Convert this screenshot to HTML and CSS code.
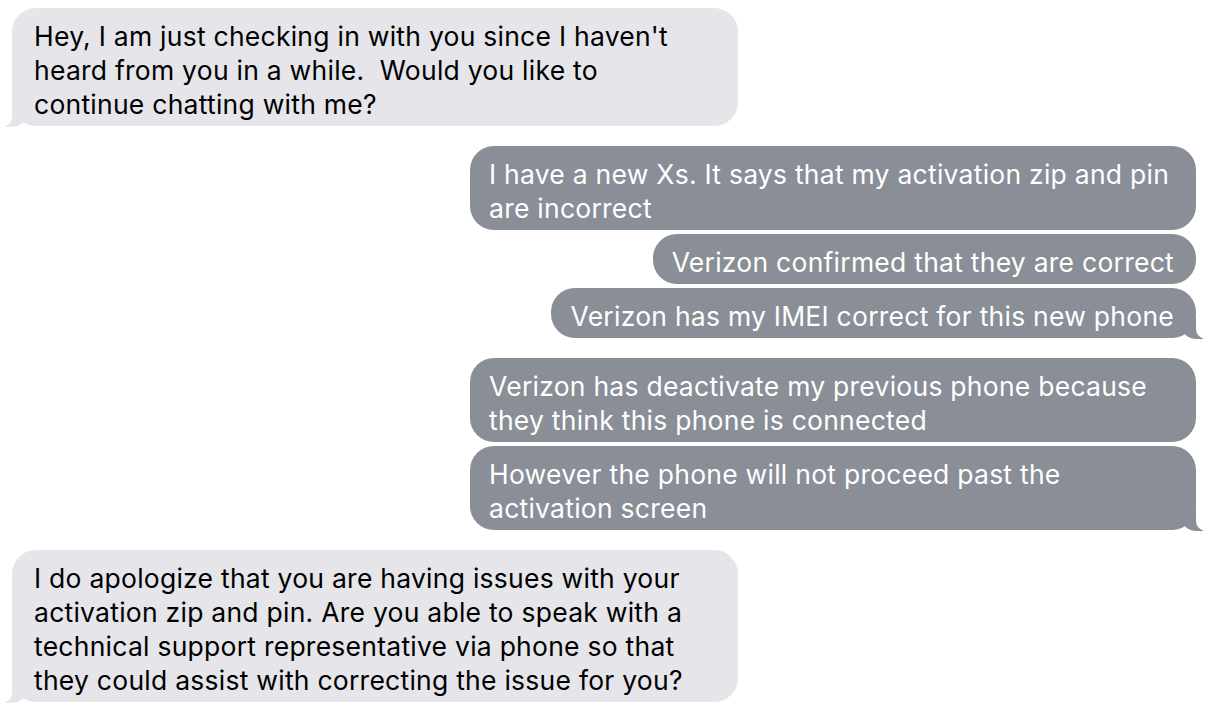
FILE: index.html
```html
<!DOCTYPE html>
<html>
<head>
<meta charset="utf-8">
<link rel="stylesheet" href="styles.css">
</head>
<body>
<div class="thread">
  <div class="msg them wide tail">Hey, I am just checking in with you since I haven't<br>heard from you in a while.&nbsp; Would you like to<br>continue chatting with me?</div>

  <div class="msg me wide gap-lg">I have a new Xs. It says that my activation zip and pin<br>are incorrect</div>
  <div class="msg me gap-sm">Verizon confirmed that they are correct</div>
  <div class="msg me gap-sm tail">Verizon has my IMEI correct for this new phone</div>

  <div class="msg me wide gap-lg">Verizon has deactivate my previous phone because<br>they think this phone is connected</div>
  <div class="msg me wide gap-sm tail">However the phone will not proceed past the<br>activation screen</div>

  <div class="msg them wide gap-lg tail">I do apologize that you are having issues with your<br>activation zip and pin. Are you able to speak with a<br>technical support representative via phone so that<br>they could assist with correcting the issue for you?</div>
</div>
</body>
</html>
```

FILE: styles.css
```css
* { box-sizing: border-box; }

html, body {
  margin: 0;
  padding: 0;
  background: #ffffff;
}

body {
  width: 1216px;
  height: 712px;
  overflow: hidden;
  font-family: "Inter", "Liberation Sans", sans-serif;
}

.thread {
  display: flex;
  flex-direction: column;
  padding: 8px 20px 0 12px;
}

.msg {
  position: relative;
  font-size: 26.5px;
  line-height: 34px;
  letter-spacing: 0.25px;
  padding: 11px 21px 5px 21px;
  border-radius: 24px;
  white-space: nowrap;
}

.wide {
  width: 726px;
}

.them {
  align-self: flex-start;
  background: #e5e5ea;
  color: #000000;
  padding-left: 22px;
}

.me {
  align-self: flex-end;
  background: #898e97;
  color: #ffffff;
  padding-left: 19px;
  padding-right: 22px;
}

.gap-sm { margin-top: 4px; }
.gap-lg { margin-top: 20px; }

.me.tail::before {
  content: "";
  position: absolute;
  bottom: -1px;
  right: -7px;
  width: 22px;
  height: 22px;
  background: #898e97;
  border-bottom-left-radius: 16px 14px;
}

.me.tail::after {
  content: "";
  position: absolute;
  bottom: -1px;
  right: -26px;
  width: 26px;
  height: 24px;
  background: #ffffff;
  border-bottom-left-radius: 10px;
}

.them.tail::before {
  content: "";
  position: absolute;
  bottom: -1px;
  left: -7px;
  width: 22px;
  height: 22px;
  background: #e5e5ea;
  border-bottom-right-radius: 16px 14px;
}

.them.tail::after {
  content: "";
  position: absolute;
  bottom: -1px;
  left: -26px;
  width: 26px;
  height: 24px;
  background: #ffffff;
  border-bottom-right-radius: 10px;
}
```
